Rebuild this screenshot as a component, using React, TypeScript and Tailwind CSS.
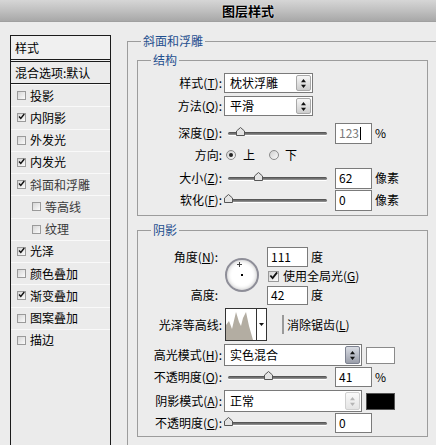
import type { ReactNode } from "react";

// Photoshop "图层样式" dialog — 斜面和浮雕 page

const layerItems = [
  { label: "投影", on: false },
  { label: "内阴影", on: true },
  { label: "外发光", on: false },
  { label: "内发光", on: true },
  { label: "斜面和浮雕", on: true, dim: true },
  { label: "等高线", on: false, sub: true, dim: true },
  { label: "纹理", on: false, sub: true, dim: true },
  { label: "光泽", on: true },
  { label: "颜色叠加", on: false },
  { label: "渐变叠加", on: true },
  { label: "图案叠加", on: false },
  { label: "描边", on: false },
];

function Check({ on, big = false }: { on: boolean; big?: boolean }) {
  return (
    <span
      className={`relative shrink-0 border border-[#9a9a9a] bg-gradient-to-br from-[#d6d6d6] to-[#fbfbfb] ${
        big ? "w-[11px] h-[11px]" : "w-[9px] h-[9px]"
      }`}
    >
      {on && (
        <svg viewBox="0 0 10 10" className="absolute -top-[1px] left-0 w-full h-full">
          <path d="M1.5 5 L4 7.8 L9 1.5" fill="none" stroke="#111" strokeWidth="2" />
        </svg>
      )}
    </span>
  );
}

function Radio({ on }: { on: boolean }) {
  return (
    <span className="w-[10px] h-[10px] shrink-0 rounded-full border border-[#8a8a8a] bg-gradient-to-br from-[#d0d0d0] to-[#fafafa] flex items-center justify-center">
      {on && <span className="w-[4px] h-[4px] rounded-full bg-[#222]" />}
    </span>
  );
}

function Spinner({ dark = false, faint = false }: { dark?: boolean; faint?: boolean }) {
  return (
    <span
      className={`m-[1px] w-[15px] shrink-0 rounded-[2px] border flex items-center justify-center ${
        dark
          ? "border-[#7d8290] bg-gradient-to-b from-[#d9dce3] to-[#9a9eaa]"
          : faint
          ? "border-[#d0d0d0] bg-gradient-to-b from-[#fafafa] to-[#e4e4e4]"
          : "border-[#a8a8a8] bg-gradient-to-b from-[#f7f7f7] to-[#cdcdcd]"
      }`}
    >
      <svg viewBox="0 0 7 11" className="w-[7px] h-[11px]">
        <path d="M3.5 1 L6 4.2 L1 4.2 Z M1 6.8 L6 6.8 L3.5 10 Z" fill={faint ? "#b5b5b5" : "#111"} />
      </svg>
    </span>
  );
}

function Select({ value, className, dark, faint }: { value: string; className: string; dark?: boolean; faint?: boolean }) {
  return (
    <div className={`flex border border-[#7a7a7a] bg-white ${className}`}>
      <span className="flex-1 pl-[5px] flex items-center whitespace-nowrap">{value}</span>
      <Spinner dark={dark} faint={faint} />
    </div>
  );
}

function Input({ value, className = "w-[37px] h-[20px]", gray, caret }: { value: string; className?: string; gray?: boolean; caret?: boolean }) {
  return (
    <div className={`flex items-center border border-[#7b7b7b] bg-white pl-[3px] ${className} ${gray ? "text-[#7a7a7a]" : ""}`}>
      {value}
      {caret && <span className="ml-[1px] w-px h-[13px] bg-black" />}
    </div>
  );
}

function Slider({ pos }: { pos: number }) {
  return (
    <div className="relative ml-[6px] w-[99px] h-[10px] flex items-center">
      <div className="w-full h-[3px] rounded-full bg-gradient-to-b from-[#4a4a4a] to-[#9a9a9a] shadow-[0_1px_0_#fff]" />
      <svg viewBox="0 0 9 9" className="absolute top-[-1px] w-[9px] h-[9px]" style={{ left: pos - 4 }}>
        <path d="M4.5 0.5 L8.5 4 L8.5 8.5 L0.5 8.5 L0.5 4 Z" fill="#e4e4e4" stroke="#555" />
      </svg>
    </div>
  );
}

function Row({ label, className, children }: { label: ReactNode; className: string; children?: ReactNode }) {
  return (
    <div className={`flex items-center ${className}`}>
      <span className="w-[76px] text-right whitespace-nowrap">{label}</span>
      {children}
    </div>
  );
}

function Contour() {
  return (
    <div className="ml-[3px] w-[42px] h-[33px] flex border border-[#333] bg-white">
      <svg viewBox="0 0 30 31" className="w-[30px] h-full">
        <path
          d="M0 31 L0 16 L3 12 L6 20 L10 3 L13 13 L15 17 L17 9 L20 3 L23 17 L27 31 Z"
          fill="#b3ada2"
        />
      </svg>
      <span className="flex-1 border-l border-[#333] flex items-center justify-center">
        <svg viewBox="0 0 5 3" className="w-[5px] h-[3px]">
          <path d="M0 0 L5 0 L2.5 3 Z" fill="#111" />
        </svg>
      </span>
    </div>
  );
}

export default function App() {
  return (
    <div className="w-[436px] h-[445px] overflow-hidden bg-[#ececec] text-[12px] leading-[16px] text-black font-['Noto_Sans_CJK_SC','Noto_Sans',sans-serif]">
      {/* title bar */}
      <div className="h-[22px] pl-[60px] flex items-center justify-center border-b border-[#a0a0a0] bg-gradient-to-b from-[#d6d6d6] via-[#c0c0c0] to-[#a8a8a8]">
        <span className="text-[13px] font-bold [text-shadow:0_0_2px_#fff]">图层样式</span>
      </div>

      <div className="flex">
        {/* styles list */}
        <aside className="ml-[10px] mt-[13px] w-[101px] h-[420px] shrink-0 border border-[#1b1b1b] bg-[#ebebeb]">
          <div className="h-[26px] pl-[4px] flex items-center border-b-[3px] border-double border-[#1b1b1b] bg-[#f0f0f0]">样式</div>
          <div className="h-[22px] pl-[4px] flex items-center border-b border-[#1b1b1b] whitespace-nowrap">混合选项:默认</div>
          {layerItems.map((it) => (
            <div
              key={it.label}
              className={`h-[22.25px] flex items-center border-t border-[#f9f9f9] ${it.sub ? "pl-[21px]" : "pl-[6px]"} ${
                it.dim ? "text-[#3a3a3a]" : ""
              }`}
            >
              <Check on={it.on} />
              <span className="ml-[4px] whitespace-nowrap">{it.label}</span>
            </div>
          ))}
        </aside>

        {/* settings */}
        <fieldset className="ml-[16px] mt-[11px] w-[320px] h-[420px] shrink-0 border border-[#9c9c9c] pl-[9px]">
          <legend className="ml-[4px] px-[2px] text-[#1f4f8f]">斜面和浮雕</legend>

          <fieldset className="mt-[3px] w-[291px] border border-[#9c9c9c] pl-[8px] pb-[4px]">
            <legend className="ml-[5px] px-[2px] text-[#1f4f8f]">结构</legend>
            <Row label={<>样式(<u>T</u>):</>} className="mt-[5px] h-[20px]">
              <Select value="枕状浮雕" className="ml-[2px] w-[89px] h-[20px]" />
            </Row>
            <Row label={<>方法(<u>Q</u>):</>} className="mt-[3px] h-[20px]">
              <Select value="平滑" className="ml-[2px] w-[89px] h-[20px]" />
            </Row>
            <Row label={<>深度(<u>D</u>):</>} className="mt-[6px] h-[22px]">
              <Slider pos={12} />
              <Input value="123" gray caret className="ml-[8px] w-[37px] h-[21px]" />
              <span className="ml-[3px]">%</span>
            </Row>
            <Row label="方向:" className="h-[22px]">
              <span className="ml-[4px]"><Radio on /></span>
              <span className="ml-[7px]">上</span>
              <span className="ml-[14px]"><Radio on={false} /></span>
              <span className="ml-[6px]">下</span>
            </Row>
            <Row label={<>大小(<u>Z</u>):</>} className="mt-[1px] h-[22px]">
              <Slider pos={30} />
              <Input value="62" className="ml-[8px] w-[37px] h-[21px]" />
              <span className="ml-[3px]">像素</span>
            </Row>
            <Row label={<>软化(<u>F</u>):</>} className="h-[22px]">
              <Slider pos={0} />
              <Input value="0" className="ml-[8px] w-[37px] h-[21px]" />
              <span className="ml-[3px]">像素</span>
            </Row>
          </fieldset>

          <fieldset className="mt-[6px] w-[291px] border border-[#9c9c9c] pl-[8px] pb-[2px]">
            <legend className="ml-[5px] px-[2px] text-[#1f4f8f]">阴影</legend>
            <div className="mt-[9px] flex">
              <div className="w-[72px] flex flex-col">
                <div className="h-[20px] flex items-center justify-end whitespace-nowrap">角度(<u>N</u>):</div>
                <div className="h-[18px]" />
                <div className="h-[20px] flex items-center justify-end">高度:</div>
              </div>
              <div className="relative ml-[7px] mt-[11px] w-[34px] h-[34px] rounded-full border-2 border-[#8e8e98] bg-white shadow-[inset_0_0_4px_#bbb]">
                <span className="absolute left-[14px] top-[14px] w-[2px] h-[2px] bg-black" />
                <span className="absolute left-[10px] top-[4px] w-[5px] h-px bg-[#444]" />
                <span className="absolute left-[12px] top-[2px] w-px h-[5px] bg-[#444]" />
              </div>
              <div className="ml-[8px] flex flex-col">
                <div className="h-[20px] flex items-center">
                  <Input value="111" className="w-[41px] h-[20px]" />
                  <span className="ml-[3px]">度</span>
                </div>
                <div className="h-[18px] flex items-center pl-[1px]">
                  <Check on big />
                  <span className="ml-[4px] whitespace-nowrap">使用全局光(<u>G</u>)</span>
                </div>
                <div className="h-[20px] flex items-center">
                  <Input value="42" className="w-[41px] h-[19px]" />
                  <span className="ml-[3px]">度</span>
                </div>
              </div>
            </div>
            <Row label="光泽等高线:" className="mt-[3px] h-[33px]">
              <Contour />
              <span className="ml-[15px]"><Check on={false} big /></span>
              <span className="ml-[3px] whitespace-nowrap">消除锯齿(<u>L</u>)</span>
            </Row>
            <Row label={<>高光模式(<u>H</u>):</>} className="mt-[3px] h-[22px]">
              <Select value="实色混合" dark className="ml-[2px] w-[138px] h-[22px]" />
              <span className="ml-[4px] w-[29px] h-[17px] border border-[#8a8a8a] bg-white" />
            </Row>
            <Row label={<>不透明度(<u>O</u>):</>} className="h-[22px]">
              <Slider pos={40} />
              <Input value="41" className="ml-[8px] w-[37px] h-[20px]" />
              <span className="ml-[3px]">%</span>
            </Row>
            <Row label={<>阴影模式(<u>A</u>):</>} className="mt-[2px] h-[22px]">
              <Select value="正常" faint className="ml-[2px] w-[138px] h-[22px]" />
              <span className="ml-[4px] w-[29px] h-[17px] border border-[#555] bg-black" />
            </Row>
            <Row label={<>不透明度(<u>C</u>):</>} className="h-[22px]">
              <Slider pos={0} />
              <Input value="0" className="ml-[8px] w-[37px] h-[20px]" />
            </Row>
          </fieldset>
        </fieldset>
      </div>
    </div>
  );
}
